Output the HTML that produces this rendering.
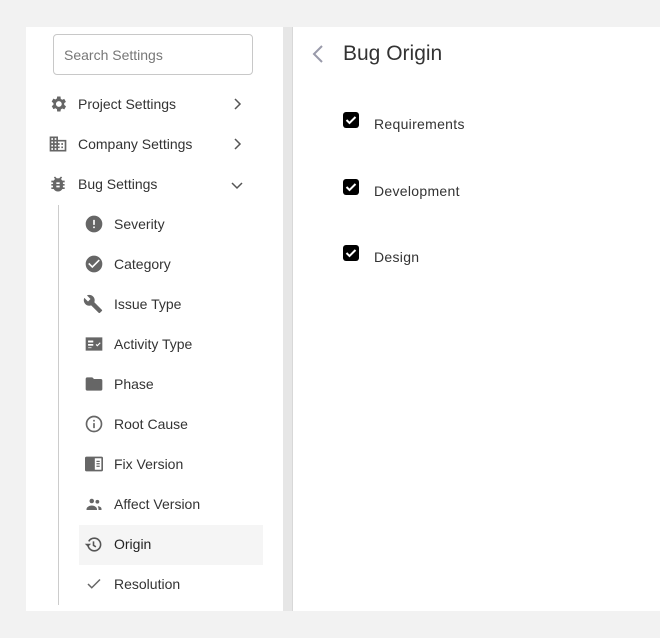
<!DOCTYPE html>
<html><head><style>
*{margin:0;padding:0;box-sizing:border-box}
body{width:660px;height:638px;background:#f2f2f2;font-family:"Liberation Sans",sans-serif;position:relative;overflow:hidden;color:#333}
.l{position:absolute;left:26px;top:27px;width:257px;height:584px;background:#fff}
.d{position:absolute;left:283px;top:27px;width:10px;height:584px;background:#e6e6e6;border-right:1px solid #d8d8d8}
.r{position:absolute;left:293px;top:27px;width:367px;height:584px;background:#fff}
.s{position:absolute;left:53px;top:34px;width:200px;height:41px;border:1px solid #c8c8c8;border-radius:4px;font-size:14px;color:#777;padding:12px 10px}
.it{position:absolute;height:40px;display:flex;align-items:center;font-size:14px;color:#333}
.it svg{position:absolute}
.vl{position:absolute;left:58px;top:205px;width:1px;height:400px;background:#ccc}
.hl{position:absolute;left:79px;top:525px;width:184px;height:40px;background:#f5f5f5}
.cb{position:absolute;left:343px;width:16px;height:16px;background:#000;border-radius:3px}
.lb{position:absolute;left:374px;font-size:14px;color:#333;letter-spacing:0.3px}
</style></head><body>
<div class="l"></div><div class="d"></div><div class="r"></div>
<div class="s">Search Settings</div>
<div class="vl"></div><div class="hl"></div>

<svg style="position:absolute;left:48px;top:94px" width="20" height="20" viewBox="0 0 24 24"><path fill="#666" d="M19.4 13a7.5 7.5 0 000-2l2.1-1.6-2-3.5-2.5 1a7 7 0 00-1.7-1L15 3h-4l-.4 2.6a7 7 0 00-1.7 1l-2.5-1-2 3.5L6.6 11a7.5 7.5 0 000 2l-2.1 1.6 2 3.5 2.5-1a7 7 0 001.7 1L11 21h4l.4-2.6a7 7 0 001.7-1l2.5 1 2-3.5zM13 15.5a3.5 3.5 0 110-7 3.5 3.5 0 010 7z"/></svg>
<div class="it" style="left:78px;top:84px">Project Settings</div>
<svg style="position:absolute;left:232px;top:98px" width="10" height="12" viewBox="0 0 10 12"><path d="M3 1l5 5-5 5" stroke="#555" stroke-width="1.5" fill="none"/></svg>

<svg style="position:absolute;left:48px;top:134px" width="20" height="20" viewBox="0 0 24 24"><path fill="#666" d="M12 7V3H2v18h20V7H12zM6 19H4v-2h2v2zm0-4H4v-2h2v2zm0-4H4V9h2v2zm0-4H4V5h2v2zm4 12H8v-2h2v2zm0-4H8v-2h2v2zm0-4H8V9h2v2zm0-4H8V5h2v2zm10 12h-8v-2h2v-2h-2v-2h2v-2h-2V9h8v10zm-2-8h-2v2h2v-2zm0 4h-2v2h2v-2z"/></svg>
<div class="it" style="left:78px;top:124px">Company Settings</div>
<svg style="position:absolute;left:232px;top:138px" width="10" height="12" viewBox="0 0 10 12"><path d="M3 1l5 5-5 5" stroke="#555" stroke-width="1.5" fill="none"/></svg>

<svg style="position:absolute;left:48px;top:174px" width="20" height="20" viewBox="0 0 24 24"><path fill="#666" d="M20 8h-2.8a6 6 0 00-1.8-2l1.6-1.6L15.6 3l-2.2 2.2a6 6 0 00-2.8 0L8.4 3 7 4.4 8.6 6a6 6 0 00-1.8 2H4v2h2.1a6 6 0 000 1v1H4v2h2v1a6 6 0 000 1H4v2h2.8a6 6 0 0010.4 0H20v-2h-2.1a6 6 0 000-1v-1h2v-2h-2v-1a6 6 0 000-1H20V8zm-6 8h-4v-2h4v2zm0-4h-4v-2h4v2z"/></svg>
<div class="it" style="left:78px;top:164px">Bug Settings</div>
<svg style="position:absolute;left:231px;top:180px" width="12" height="10" viewBox="0 0 12 10"><path d="M1 3l5 5 5-5" stroke="#555" stroke-width="1.5" fill="none"/></svg>

<svg style="position:absolute;left:84px;top:214px" width="20" height="20" viewBox="0 0 24 24"><path fill="#666" d="M12 2a10 10 0 100 20 10 10 0 000-20zm1 15h-2v-2h2v2zm0-4h-2V7h2v6z"/></svg>
<div class="it" style="left:114px;top:204px">Severity</div>
<svg style="position:absolute;left:84px;top:254px" width="20" height="20" viewBox="0 0 24 24"><path fill="#666" d="M12 2a10 10 0 100 20 10 10 0 000-20zm-2 15l-5-5 1.4-1.4L10 14.2l7.6-7.6L19 8l-9 9z"/></svg>
<div class="it" style="left:114px;top:244px">Category</div>
<svg style="position:absolute;left:83px;top:294px" width="20" height="20" viewBox="0 0 24 24"><path fill="#666" d="M22.7 19l-9.1-9.1c.9-2.3.4-5-1.5-6.9-2-2-5-2.4-7.4-1.3L9 6 6 9 1.6 4.7C.4 7.1.9 10.1 2.9 12.1c1.9 1.9 4.6 2.4 6.9 1.5l9.1 9.1c.4.4 1 .4 1.4 0l2.3-2.3c.5-.4.5-1.1.1-1.4z"/></svg>
<div class="it" style="left:114px;top:284px">Issue Type</div>
<svg style="position:absolute;left:84px;top:334px" width="20" height="20" viewBox="0 0 24 24"><path fill="#666" d="M2 4h20v16H2zM5 8v2h6V8zm0 4v2h6v-2zm9 1l2 2 4-4-1-1-3 3-1-1z"/><path fill="#fff" d="M5 8h6v2H5zm0 4h6v2H5zm0 4h4v1H5z"/></svg>
<div class="it" style="left:114px;top:324px">Activity Type</div>
<svg style="position:absolute;left:84px;top:374px" width="20" height="20" viewBox="0 0 24 24"><path fill="#666" d="M10 4H4a2 2 0 00-2 2v12a2 2 0 002 2h16a2 2 0 002-2V8a2 2 0 00-2-2h-8l-2-2z"/></svg>
<div class="it" style="left:114px;top:364px">Phase</div>
<svg style="position:absolute;left:84px;top:414px" width="20" height="20" viewBox="0 0 24 24"><circle cx="12" cy="12" r="9" fill="none" stroke="#666" stroke-width="2"/><path fill="#666" d="M11 11h2v6h-2zm0-4h2v2h-2z"/></svg>
<div class="it" style="left:114px;top:404px">Root Cause</div>
<svg style="position:absolute;left:84px;top:455px" width="20" height="18" viewBox="0 0 24 22"><path fill="#666" d="M3 2h18a2 2 0 012 2v14a2 2 0 01-2 2H3a2 2 0 01-2-2V4a2 2 0 012-2z"/><path fill="#fff" d="M13 4h8v14h-8z"/><path fill="#666" d="M15 7h4v1.5h-4zm0 3h4v1.5h-4zm0 3h4v1.5h-4z"/></svg>
<div class="it" style="left:114px;top:444px">Fix Version</div>
<svg style="position:absolute;left:84px;top:495px" width="20" height="18" viewBox="0 0 24 24"><circle cx="9" cy="8" r="3" fill="#666"/><circle cx="16.5" cy="9" r="2.5" fill="#666"/><path fill="#666" d="M2 19c0-3 4-5 7-5s7 2 7 5v1H2zm15-4c2 0 5 1 5 3.5V20h-4v-1c0-1.5-.4-2.8-1-4z"/></svg>
<div class="it" style="left:114px;top:484px">Affect Version</div>
<svg style="position:absolute;left:84px;top:535px" width="19" height="19" viewBox="0 0 24 24"><path fill="none" stroke="#555" stroke-width="2" d="M5 12a8 8 0 108-8 8 8 0 00-7 4"/><path fill="#555" d="M1 11l4 4 4-4z"/><path fill="none" stroke="#555" stroke-width="2" d="M12 8v5l3 2"/></svg>
<div class="it" style="left:114px;top:524px;color:#222">Origin</div>
<svg style="position:absolute;left:85px;top:575px" width="18" height="18" viewBox="0 0 24 24"><path fill="none" stroke="#666" stroke-width="2" d="M4 12l5 5L20 6"/></svg>
<div class="it" style="left:114px;top:564px">Resolution</div>

<svg style="position:absolute;left:311px;top:44px" width="14" height="20" viewBox="0 0 14 20"><path d="M11 2L3 10l8 8" stroke="#999aaa" stroke-width="2" fill="none"/></svg>
<div style="position:absolute;left:343px;top:42px;font-size:21px;color:#333">Bug Origin</div>

<div class="cb" style="top:112px"></div><svg style="position:absolute;left:343px;top:112px" width="16" height="16"><path d="M3.5 8l3 3 6-6" stroke="#fff" stroke-width="2" fill="none"/></svg>
<div class="lb" style="top:116px">Requirements</div>
<div class="cb" style="top:179px"></div><svg style="position:absolute;left:343px;top:179px" width="16" height="16"><path d="M3.5 8l3 3 6-6" stroke="#fff" stroke-width="2" fill="none"/></svg>
<div class="lb" style="top:183px">Development</div>
<div class="cb" style="top:245px"></div><svg style="position:absolute;left:343px;top:245px" width="16" height="16"><path d="M3.5 8l3 3 6-6" stroke="#fff" stroke-width="2" fill="none"/></svg>
<div class="lb" style="top:249px">Design</div>
</body></html>
